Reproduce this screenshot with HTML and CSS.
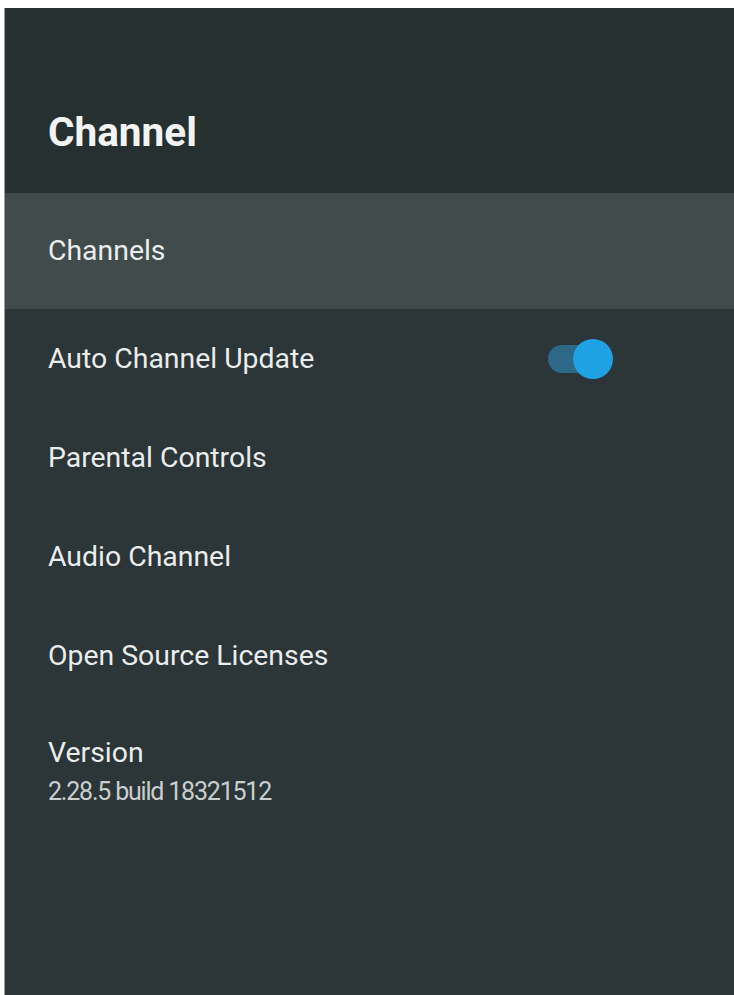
FILE: index.html
```html
<!DOCTYPE html>
<html lang="en">
<head>
<meta charset="utf-8">
<title>Channel</title>
<link rel="stylesheet" href="styles.css">
</head>
<body>
<div class="screen">
  <header class="header">
    <h1 class="title">Channel</h1>
  </header>
  <div class="row row-selected"><span class="label">Channels</span></div>
  <div class="row row-toggle">
    <span class="label">Auto Channel Update</span>
    <span class="toggle" role="switch" aria-checked="true"><span class="track"></span><span class="thumb"></span></span>
  </div>
  <div class="row"><span class="label">Parental Controls</span></div>
  <div class="row"><span class="label">Audio Channel</span></div>
  <div class="row"><span class="label">Open Source Licenses</span></div>
  <div class="version">
    <div class="label version-title">Version</div>
    <div class="version-sub">2.28.5 build 18321512</div>
  </div>
</div>
</body>
</html>
```

FILE: styles.css
```css
html, body {
  margin: 0;
  padding: 0;
  background: #ffffff;
}
body {
  font-family: Roboto, "Noto Sans", "Liberation Sans", sans-serif;
  overflow: hidden;
}
.screen {
  margin: 8px 0 0 4px;
  height: 987px;
  background: #2c3537;
  border-left: 1px solid #9aa0a0;
  display: flex;
  flex-direction: column;
  box-sizing: border-box;
}
.header {
  height: 185px;
  background: #273030;
  padding: 100px 0 0 43px;
  box-sizing: border-box;
}
.title {
  margin: 0;
  font-size: 40.5px;
  line-height: 48px;
  font-weight: 700;
  color: #f2f4f4;
}
.row {
  height: 99px;
  display: flex;
  align-items: center;
  padding-left: 43px;
  box-sizing: border-box;
}
.row-selected {
  height: 116px;
  background: #414b4b;
}
.label {
  font-size: 28.4px;
  line-height: 34px;
  color: #e9eded;
}
.row-toggle {
  padding-right: 121px;
}
.toggle {
  margin-left: auto;
  position: relative;
  width: 65px;
  height: 40px;
  display: block;
}
.track {
  position: absolute;
  left: 0;
  top: 6px;
  width: 56px;
  height: 28px;
  border-radius: 14px;
  background: #2d6886;
}
.thumb {
  position: absolute;
  right: 0;
  top: 0;
  width: 40px;
  height: 40px;
  border-radius: 50%;
  background: #1fa2e3;
}
.version {
  padding: 31px 0 0 43px;
}
.version-title {
  display: block;
}
.version-sub {
  margin-top: 8px;
  font-size: 25px;
  line-height: 28px;
  letter-spacing: -1.2px;
  color: #c9cfcf;
}
```
